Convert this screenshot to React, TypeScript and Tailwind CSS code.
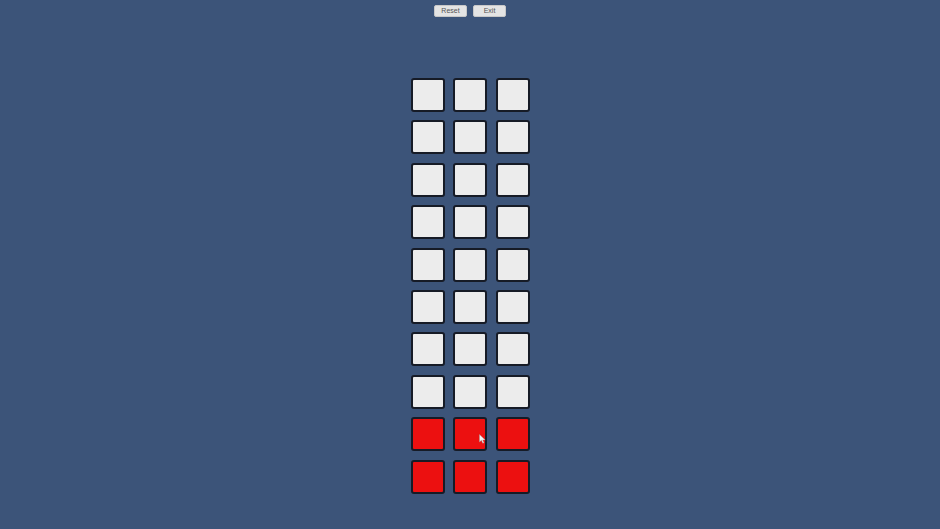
const rows = Array.from({ length: 10 }, (_, i) => i);
const cols = [0, 1, 2];

function Tile({ red }: { red: boolean }) {
  return (
    <div
      className={
        "w-[34px] h-[34px] rounded-[3px] border-2 border-[#161b26] " +
        (red ? "bg-[#ec1010]" : "bg-[#ececec]")
      }
    />
  );
}

export default function App() {
  return (
    <div
      className="relative w-[940px] h-[529px] overflow-hidden bg-[#3c5479] flex flex-col items-center"
      style={{ fontFamily: '"Liberation Sans", Arial, sans-serif' }}
    >
      <div className="flex gap-[6px] mt-[5px]">
        <button className="w-[33px] h-[12px] rounded-[2px] bg-[#e4e4e4] border border-[#c8c8c8] text-[7px] leading-[10px] text-[#555]">
          Reset
        </button>
        <button className="w-[33px] h-[12px] rounded-[2px] bg-[#e4e4e4] border border-[#c8c8c8] text-[7px] leading-[10px] text-[#555]">
          Exit
        </button>
      </div>
      <div className="flex flex-col gap-[8.4px] mt-[61px]">
        {rows.map((r) => (
          <div key={r} className="flex gap-[8.5px]">
            {cols.map((c) => (
              <Tile key={c} red={r >= 8} />
            ))}
          </div>
        ))}
      </div>
      <svg
        className="absolute left-[479px] top-[434px]"
        width="7"
        height="10"
        viewBox="0 0 7 10"
      >
        <path d="M0.5 0.5 L0.5 8 L2.4 6.3 L3.8 9.3 L5 8.8 L3.7 5.9 L6.2 5.9 Z" fill="#f4f4f4" stroke="#999" strokeWidth="0.4" />
      </svg>
    </div>
  );
}
